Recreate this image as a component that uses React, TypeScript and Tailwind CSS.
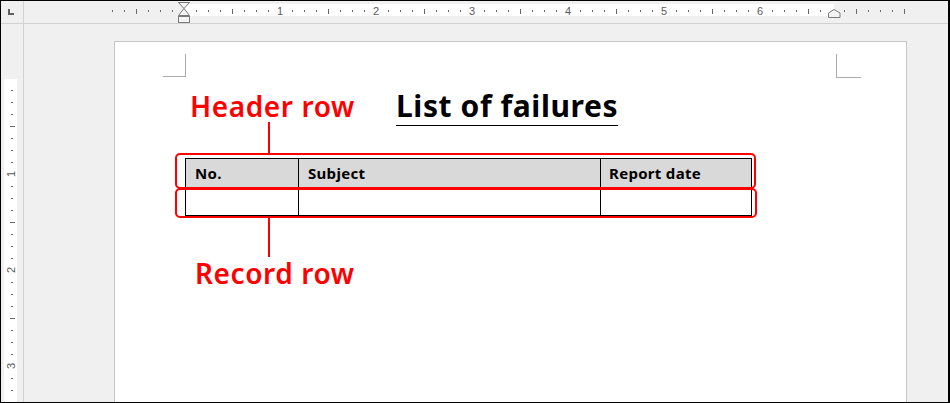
import React from 'react';

// ruler ticks: one every 1/8 inch (12px at this zoom)
const hTicks = Array.from({ length: 67 }, (_, i) => i - 6);
const vTicks = Array.from({ length: 27 }, (_, i) => i + 1);

function TopRuler() {
  return (
    <svg width="924" height="22" viewBox="24 1 924 22" className="block">
      <rect x="183" y="4" width="651" height="12" fill="#ffffff" />
      {hTicks.map((k) => {
        const x = 184 + k * 12;
        if (k === 0) return null;
        if (k % 8 === 0 && k > 0 && k <= 48) {
          return (
            <text key={k} x={x} y="15" textAnchor="middle" fontSize="11" fill="#5a5a5a" fontFamily="Liberation Sans, sans-serif">
              {k / 8}
            </text>
          );
        }
        if (k % 4 === 0) {
          return <rect key={k} x={x} y="9" width="1" height="5" fill="#6a6a6a" shapeRendering="crispEdges" />;
        }
        return <rect key={k} x={x} y="10" width="1" height="2" fill="#6a6a6a" shapeRendering="crispEdges" />;
      })}
      {/* first line / hanging indent */}
      <path d="M178.5 2.5 H189.5 L184 8.5 L189.5 15.5 H178.5 L184 8.5 Z" fill="#f4f4f4" stroke="#7a7a7a" strokeWidth="1" />
      <rect x="178.5" y="16.5" width="11" height="6" fill="#f4f4f4" stroke="#7a7a7a" strokeWidth="1" />
      {/* right indent */}
      <path d="M828.5 17.5 V13 L834 9.5 L840 13 V17.5 Z" fill="#f4f4f4" stroke="#7a7a7a" strokeWidth="1" />
    </svg>
  );
}

function SideRuler() {
  return (
    <svg width="22" height="378" viewBox="1 24 22 378" className="block">
      <rect x="4" y="79" width="13" height="330" fill="#ffffff" />
      {vTicks.map((k) => {
        const y = 78 + k * 12;
        if (k % 8 === 0) {
          return (
            <text
              key={k}
              x="10.5"
              y={y + 4}
              textAnchor="middle"
              fontSize="11"
              fill="#5a5a5a"
              fontFamily="Liberation Sans, sans-serif"
              transform={`rotate(-90 10.5 ${y})`}
            >
              {k / 8}
            </text>
          );
        }
        if (k % 4 === 0) {
          return <rect key={k} x="10" y={y} width="5" height="1" fill="#6a6a6a" shapeRendering="crispEdges" />;
        }
        return <rect key={k} x="11" y={y} width="2" height="1" fill="#6a6a6a" shapeRendering="crispEdges" />;
      })}
    </svg>
  );
}

export default function App() {
  return (
    <div className="w-[950px] h-[403px] overflow-hidden border-t border-l border-b border-r-2 border-black bg-[#f0f0f0] flex flex-col font-['Noto_Sans',sans-serif]">
      {/* ruler bar */}
      <div className="h-[23px] flex border-b border-[#d2d2d2] shrink-0">
        <div className="w-[23px] border-r border-[#d2d2d2] pl-[7px] pt-[8px]">
          <div className="w-[6px] h-[6px] border-l-2 border-b-2 border-[#5f5f5f]" />
        </div>
        <TopRuler />
      </div>

      <div className="flex-1 flex min-h-0">
        <div className="w-[23px] border-r border-[#d2d2d2] shrink-0">
          <SideRuler />
        </div>

        {/* document area */}
        <div className="flex-1 overflow-hidden pl-[90px] pt-[17px]">
          <div className="relative w-[793px] h-[400px] bg-white border border-[#c6c6c6]">
            {/* margin corner marks */}
            <div className="absolute left-[48px] top-[12px] w-[23px] h-[23px] border-r border-b border-[#ababab]" />
            <div className="absolute left-[721px] top-[12px] w-[25px] h-[24px] border-l border-b border-[#ababab]" />

            <div className="pl-[70px] pt-[48px] flex flex-col">
              <div className="flex items-baseline h-[32px]">
                <div className="w-[211px] pl-[5px] text-[28px] leading-[32px] font-semibold text-[#ff0000] tracking-[0.6px]">
                  Header row
                </div>
                <div className="text-[30px] leading-[32px] font-bold text-black underline decoration-1 underline-offset-[8px] tracking-[0.6px]">
                  List of failures
                </div>
              </div>

              <div className="ml-[83px] w-[2px] h-[31px] bg-[#ff0000]" />

              <div className="relative mt-[5px] w-[567px] border border-black text-[15px] font-bold text-black tracking-[0.3px]">
                <div className="grid grid-cols-[113px_302px_150px] h-[30px] bg-[#d9d9d9] border-b border-black">
                  <div className="flex items-center pl-[9px] border-r border-black">No.</div>
                  <div className="flex items-center pl-[9px] border-r border-black">Subject</div>
                  <div className="flex items-center pl-[8px]">Report date</div>
                </div>
                <div className="grid grid-cols-[113px_302px_150px] h-[26px]">
                  <div className="border-r border-black" />
                  <div className="border-r border-black" />
                  <div />
                </div>

                {/* callout frames */}
                <div className="absolute left-[-11px] top-[-6px] w-[581px] h-[36px] rounded-[5px] border-2 border-[#ff0000]" />
                <div className="absolute left-[-11px] top-[29px] w-[582px] h-[30px] rounded-[5px] border-2 border-[#ff0000]" />
              </div>

              <div className="ml-[83px] mt-[2px] w-[2px] h-[39px] bg-[#ff0000]" />

              <div className="pl-[10px] text-[28px] leading-[32px] font-semibold text-[#ff0000] tracking-[0.6px]">
                Record row
              </div>
            </div>
          </div>
        </div>
      </div>
    </div>
  );
}
